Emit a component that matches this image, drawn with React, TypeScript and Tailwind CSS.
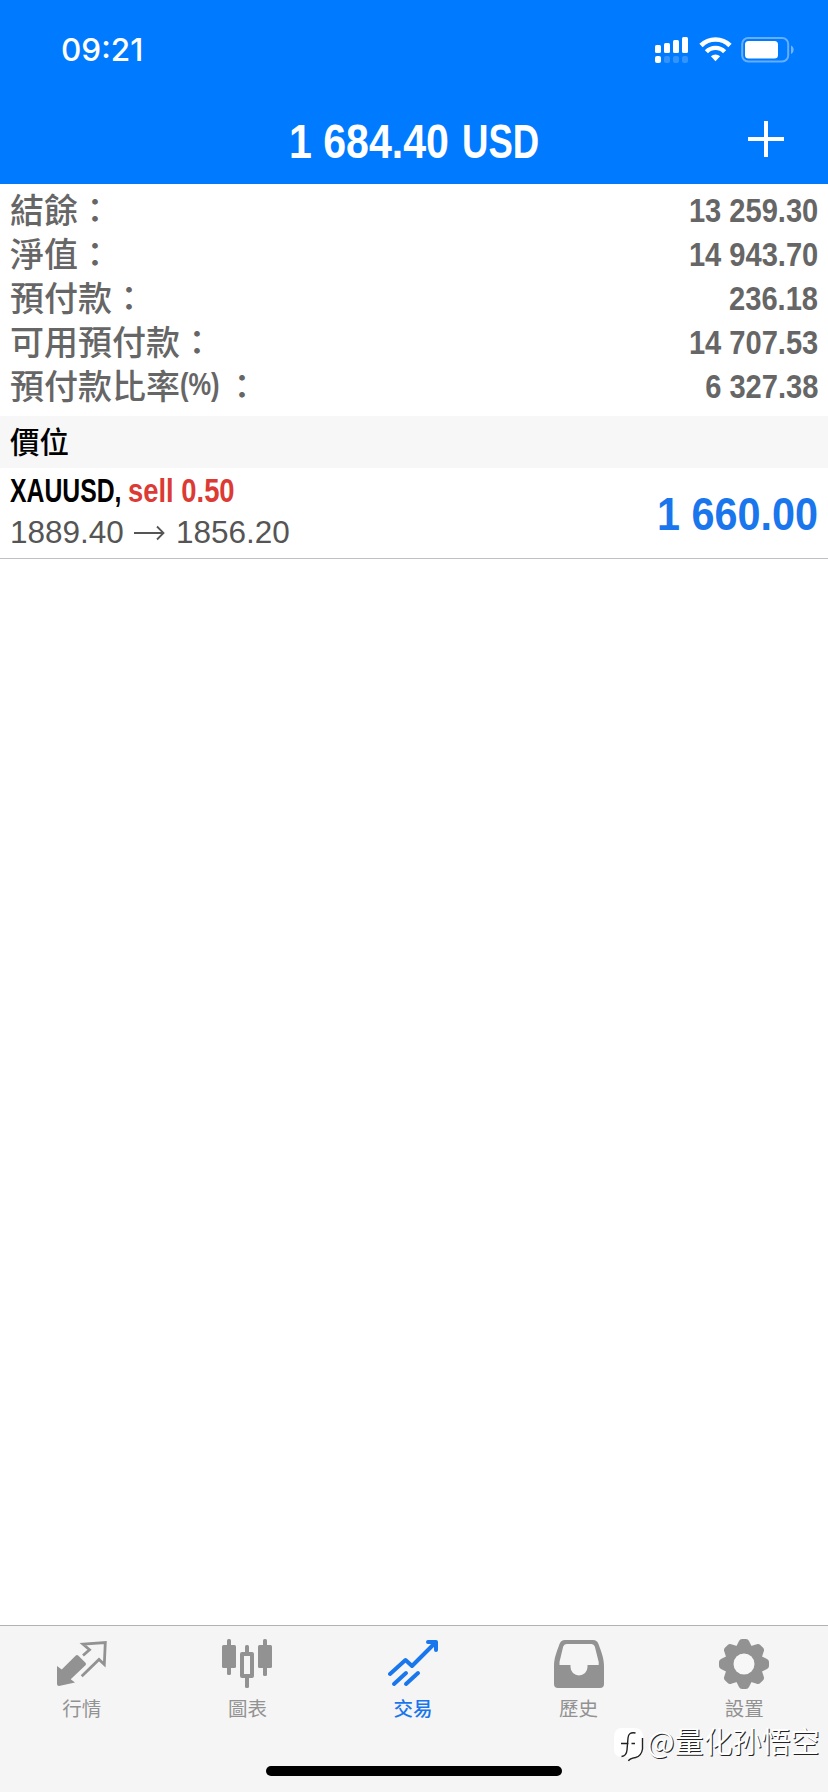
import type { ReactNode } from "react";

const accountRows = [
  { label: "結餘", value: "13 259.30" },
  { label: "淨值", value: "14 943.70" },
  { label: "預付款", value: "236.18" },
  { label: "可用預付款", value: "14 707.53" },
  { label: "預付款比率", unit: "(%)", value: "6 327.38" },
];

function StatusBar() {
  return (
    <div className="flex h-[98px] items-center justify-between pl-[61px] pr-[33px]">
      <span className="pt-px font-['Inter','Liberation_Sans',sans-serif] text-[31.5px] font-medium leading-none text-white">
        09:21
      </span>
      <div className="flex items-center pt-[2px] text-white">
        <svg width="34" height="26" viewBox="0 0 34 26" fill="currentColor">
          <rect x="0" y="8" width="6" height="8" rx="1.5" />
          <rect x="9" y="6" width="6" height="10" rx="1.5" />
          <rect x="18" y="3" width="6" height="13" rx="1.5" />
          <rect x="27" y="0" width="6" height="16" rx="1.5" />
          <rect x="0" y="19" width="6" height="7" rx="2" />
          <rect x="9" y="19" width="6" height="7" rx="2" opacity="0.2" />
          <rect x="18" y="19" width="6" height="7" rx="2" opacity="0.2" />
          <rect x="27" y="19" width="6" height="7" rx="2" opacity="0.2" />
        </svg>
        <svg className="ml-[10px]" width="33" height="26" viewBox="0 0 33 26" fill="none">
          <path d="M2 8.5a20.5 20.5 0 0 1 29 0" stroke="currentColor" strokeWidth="4.6" />
          <path d="M7.4 14.8a12.6 12.6 0 0 1 18.2 0" stroke="currentColor" strokeWidth="4.4" />
          <path d="M11.9 19.3a6.5 6.5 0 0 1 9.2 0l-4.6 5z" fill="currentColor" />
        </svg>
        <svg className="ml-[9px]" width="54" height="26" viewBox="0 0 54 26" fill="none">
          <rect x="1.2" y="1" width="46" height="23.5" rx="6" stroke="currentColor" strokeOpacity="0.4" strokeWidth="2" />
          <rect x="4" y="4" width="33" height="17.5" rx="3.5" fill="currentColor" />
          <path d="M50 8.5c3.5 1.3 3.5 7.2 0 8.5z" fill="currentColor" opacity="0.45" />
        </svg>
      </div>
    </div>
  );
}

function Tab({
  label,
  active = false,
  children,
}: {
  label: string;
  active?: boolean;
  children: ReactNode;
}) {
  return (
    <div
      className={`flex flex-1 flex-col items-center ${
        active ? "font-medium text-[#1a76ec]" : "text-[#929292]"
      }`}
    >
      <svg width="50" height="50" viewBox="0 0 50 50" fill="none">
        {children}
      </svg>
      <span className="mt-[6px] text-[19.5px] leading-[28px]">{label}</span>
    </div>
  );
}

function TabBar() {
  return (
    <nav className="relative h-[167px] border-t border-[#b2b2b2] bg-[#f5f5f5]">
      <div className="-ml-px mr-px flex pt-[13px]">
        <Tab label="行情">
          <path
            d="M0 27l4.700 3.500L18.800 16.600q1.200-1.200 2.400 0l7.300 7.200q1.200 1.200 0 2.400L13.700 40.300 18 43.500 2 47Q0 47 0 45z"
            fill="currentColor"
          />
          <path
            d="M26 16.500L32.500 10.800 26 5.200 48.300 3.500 47.300 25.500 42 20.500 24.700 37.200"
            stroke="currentColor"
            strokeWidth="2.8"
          />
        </Tab>
        <Tab label="圖表">
          <g fill="currentColor">
            <rect x="5" y="0" width="4" height="36" rx="1.5" />
            <rect x="0" y="6" width="14" height="23" rx="1.5" />
            <rect x="41" y="0" width="4" height="37" rx="1.5" />
            <rect x="36" y="6" width="14" height="23" rx="1.5" />
            <rect x="23" y="6" width="4" height="11" rx="1.5" />
            <rect x="23" y="36" width="4" height="13" rx="1.5" />
          </g>
          <rect x="20" y="15" width="10" height="22" stroke="currentColor" strokeWidth="4" strokeLinejoin="round" />
        </Tab>
        <Tab label="交易" active>
          <g stroke="currentColor" strokeWidth="4" strokeLinecap="round" strokeLinejoin="round">
            <path d="M2 35L17.5 21l6.500 6L47 4" />
            <path d="M40 3h8v8" />
            <path d="M6 45L18 34M18 45L30 34" />
          </g>
        </Tab>
        <Tab label="歷史">
          <path
            fillRule="evenodd"
            d="M11 1h28q4 0 5.500 4C47 12 50 19 50 27v18q0 4-4 4H4q-4 0-4-4V27C0 19 3 12 5.500 5Q7 1 11 1zM12.500 5Q10 5 9.200 7.500L5.500 23v3H16.500v2a8.500 8.500 0 0 0 17 0v-2H44.700v-3L40.800 7.500Q40 5 37.500 5z"
            fill="currentColor"
          />
        </Tab>
        <Tab label="設置">
          <g fill="currentColor">
            {[0, 45, 90, 135].map((angle) => (
              <path
                key={angle}
                d="M17 8L20 2q1-2 3-2h4q2 0 3 2L33 8v34l-3 6q-1 2-3 2h-4q-2 0-3-2L17 42z"
                transform={`rotate(${angle} 25 25)`}
              />
            ))}
          </g>
          <circle cx="25" cy="25" r="10.5" fill="#f7f7f7" />
        </Tab>
      </div>

      <div className="absolute left-[266px] top-[140px] h-[10px] w-[296px] rounded-full bg-black" />

      <div className="absolute left-[614px] top-[96px] flex items-start">
        <svg className="mt-[6px]" width="30" height="34" viewBox="0 0 30 34" fill="none">
          <path
            d="M8 0h12q9 0 9 9v10q0 8-5.500 10L14.500 33V29H8q-8 0-8-8V9q0-9 8-9z"
            fill="#fff"
          />
          <path
            d="M21.500 5Q14.500 3.500 14 10L13 22q-.5 6-5.500 6.500M7 15.500h7.500M17.500 15.500h3.500M28.500 10v11q-1 7-7 8.500-6 1-7 3.500"
            stroke="#222"
            strokeWidth="1.4"
          />
        </svg>
        <span className="ml-[3px] whitespace-nowrap font-['Noto_Sans_CJK_SC',sans-serif] text-[29px] leading-[36px] text-white [text-shadow:1px_1px_0_#222]">
          @量化孙悟空
        </span>
      </div>
    </nav>
  );
}

export default function App() {
  return (
    <div className="flex h-[1792px] w-[828px] flex-col overflow-hidden bg-white font-['Liberation_Sans','Noto_Sans_CJK_TC',sans-serif]">
      <header className="h-[184px] bg-[#007aff]">
        <StatusBar />
        <div className="grid h-[84px] grid-cols-[1fr_auto_1fr] items-center">
          <span />
          <h1 className="flex w-[250px] items-center whitespace-pre pt-[3px] text-[47.5px] font-bold leading-none text-white">
            <span className="inline-block w-[173px] origin-left scale-x-[0.865]">1 684.40</span>
            <span className="inline-block origin-left scale-x-[0.77]">USD</span>
          </h1>
          <svg className="mr-[44px] mt-[-3px] justify-self-end" width="36" height="36" viewBox="0 0 36 36">
            <path d="M18 0v36M0 18h36" stroke="#fff" strokeWidth="4" />
          </svg>
        </div>
      </header>

      <section className="h-[232px] px-[10px] pt-[3px] text-[#666]">
        {accountRows.map((row) => (
          <div key={row.label} className="flex h-[44px] items-center justify-between">
            <span className="flex pt-[4px] text-[34px] font-medium leading-[38px]">
              {row.label}
              {row.unit ? (
                <span className="-mt-[2px] inline-block w-[45px] origin-left scale-x-[0.82] text-[31px] font-bold">
                  {row.unit}
                </span>
              ) : null}
              <span>：</span>
            </span>
            <span className="inline-block origin-right scale-x-[0.855] pt-[2px] text-[34px] font-bold leading-[38px]">
              {row.value}
            </span>
          </div>
        ))}
      </section>

      <div className="flex h-[52px] items-center bg-[#f7f7f7] px-[10px] pt-[2px] text-[29.5px] font-medium text-black">
        價位
      </div>

      <div className="flex h-[91px] items-center justify-between border-b border-[#c0c0c4] px-[10px]">
        <div className="-mt-[2px] flex flex-col">
          <p className="flex h-[42px] items-center whitespace-pre text-[33px] font-bold text-black">
            <span className="inline-block w-[118px] origin-left scale-x-[0.75]">XAUUSD,</span>
            <span className="inline-block origin-left scale-x-[0.83] text-[#db3b34]">sell 0.50</span>
          </p>
          <p className="flex h-[42px] items-center text-[31.5px] text-[#555]">
            1889.40
            <svg className="mx-[10.5px]" width="31" height="16" viewBox="0 0 31 16" fill="none">
              <path d="M0 8h29.500M23 1.500L29.500 8 23 14.500" stroke="currentColor" strokeWidth="1.8" />
            </svg>
            1856.20
          </p>
        </div>
        <span className="inline-block origin-right scale-x-[0.88] text-[47px] font-bold leading-none text-[#1a76ec]">
          1 660.00
        </span>
      </div>

      <main className="flex-1" />
      <TabBar />
    </div>
  );
}
